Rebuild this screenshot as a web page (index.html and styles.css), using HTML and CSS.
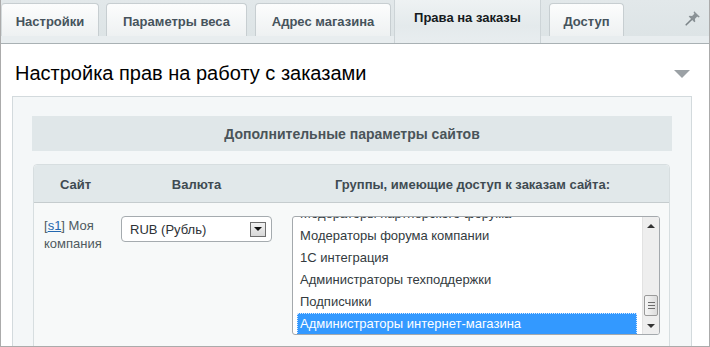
FILE: index.html
```html
<!DOCTYPE html>
<html lang="ru">
<head>
<meta charset="utf-8">
<title>Права на заказы</title>
<link rel="stylesheet" href="styles.css">
</head>
<body>
<div class="frame">
  <div class="tabbar">
    <div class="tab tab-settings">Настройки</div>
    <div class="tab tab-weight">Параметры веса</div>
    <div class="tab tab-address">Адрес магазина</div>
    <div class="tab tab-active">Права на заказы</div>
    <div class="tab tab-access">Доступ</div>
    <svg class="pin" width="16" height="16" viewBox="0 0 16 16" aria-hidden="true">
      <path d="M9.2 1.2 L14.8 6.8 L13.6 7.4 L12.2 6.6 L9.9 8.9 L10.3 11.4 L9.4 12.3 L3.7 6.6 L4.6 5.7 L7.1 6.1 L9.4 3.8 L8.6 2.4 Z" fill="#8a9296"/>
      <path d="M6.3 9.7 L1.2 14.8" stroke="#7c8488" stroke-width="1.6" stroke-linecap="round"/>
    </svg>
  </div>
  <div class="content">
    <div class="title-row">
      <h1 class="title">Настройка прав на работу с заказами</h1>
      <span class="collapse"></span>
    </div>
    <div class="panel">
      <div class="section-head">Дополнительные параметры сайтов</div>
      <div class="table">
        <div class="th">Сайт</div>
        <div class="th">Валюта</div>
        <div class="th">Группы, имеющие доступ к заказам сайта:</div>
        <div class="td td-site">[<a class="site-link" href="#">s1</a>] Моя компания</div>
        <div class="td td-cur">
          <div class="select">
            <span class="select-text">RUB (Рубль)</span>
            <span class="select-btn"><span class="caret"></span></span>
          </div>
        </div>
        <div class="td td-groups">
          <div class="listbox">
            <div class="list-view">
              <div class="list">
                <div class="opt">Модераторы партнерского форума</div>
                <div class="opt">Модераторы форума компании</div>
                <div class="opt">1С интеграция</div>
                <div class="opt">Администраторы техподдержки</div>
                <div class="opt">Подписчики</div>
                <div class="opt opt-selected">Администраторы интернет-магазина</div>
              </div>
            </div>
            <div class="scrollbar">
              <div class="sb-btn"><span class="sb-up"></span></div>
              <div class="sb-track">
                <div class="sb-thumb"><span></span><span></span><span></span></div>
              </div>
              <div class="sb-btn"><span class="sb-down"></span></div>
            </div>
          </div>
        </div>
      </div>
    </div>
  </div>
</div>
</body>
</html>
```
FILE: styles.css
```css
* { box-sizing: border-box; }
html, body { margin: 0; padding: 0; }
body {
  background: #ffffff;
  font-family: "Liberation Sans", Arial, sans-serif;
  font-size: 13px;
  color: #333;
}
.frame {
  width: 710px;
  height: 347px;
  border-left: 1px solid #ababab;
  border-right: 1px solid #ababab;
  border-bottom: 1px solid #ababab;
  overflow: hidden;
  background: #fff;
}
.tabbar {
  display: flex;
  align-items: flex-start;
  height: 44px;
  padding-top: 3px;
  background: linear-gradient(to bottom, #e2e8ea 0, #dde4e6 36px, #e8edef 36px, #e8edef 43px);
  border-bottom: 1px solid #a9b1b4;
}
.tab {
  height: 33px;
  padding: 2px 0 0;
  margin-right: 8px;
  display: flex;
  align-items: center;
  justify-content: center;
  font-weight: bold;
  font-size: 13px;
  color: #46535c;
  white-space: nowrap;
  background: linear-gradient(to bottom, #fcfdfd, #eef1f2);
  border: 1px solid #c7ced1;
  border-bottom: none;
  border-radius: 4px 4px 0 0;
}
.tab-settings { width: 98px; margin-right: 7px; border-left-color: #d4dadc; }
.tab-weight { width: 141px; }
.tab-address { width: 136px; }
.tab-access { width: 75px; }
.tab-active {
  width: 147px;
  height: 43px;
  margin-top: -3px;
  margin-left: -5px;
  padding: 10px 0 0;
  align-items: flex-start;
  line-height: 16px;
  color: #151a1d;
  background: linear-gradient(to bottom, #eef2f3, #e4eaec 60%, #e8edef);
  border-color: #cdd4d7;
  border-top: none;
  border-radius: 0;
}
.pin {
  margin-left: auto;
  margin-top: 7px;
  margin-right: 8px;
}
.content { padding: 0 17px 0 11px; }
.title-row {
  display: flex;
  align-items: center;
  justify-content: space-between;
  padding: 17px 2px 11px 3px;
}
.title {
  margin: 0;
  font-size: 20px;
  line-height: 24px;
  font-weight: normal;
  color: #000;
}
.collapse {
  width: 0;
  height: 0;
  border-left: 8px solid transparent;
  border-right: 8px solid transparent;
  border-top: 8px solid #9ba1a5;
  margin-top: 1px;
}
.panel {
  border: 1px solid #d3dadd;
  background: #f4f7f8;
  padding: 19px 19px 60px;
}
.section-head {
  height: 35px;
  background: #e0e7e9;
  display: flex;
  align-items: center;
  justify-content: center;
  font-weight: bold;
  color: #4a5459;
  font-size: 14px;
}
.table {
  margin: 13px 2px 0 1px;
  display: grid;
  grid-template-columns: 83px 159px 1fr;
  border: 1px solid #d7dee0;
  border-radius: 4px 4px 0 0;
  background: #f7f9f9;
}
.th {
  height: 38px;
  background: #e1e8ea;
  border-bottom: 1px solid #c5ccce;
  display: flex;
  align-items: center;
  justify-content: center;
  font-weight: bold;
  color: #3f4b52;
  font-size: 13px;
  padding-top: 1px;
}
.th:first-child { border-top-left-radius: 4px; }
.th:nth-child(3) { border-top-right-radius: 4px; }
.td { padding-top: 13px; padding-bottom: 60px; }
.td-site {
  padding-left: 10px;
  padding-right: 4px;
  padding-top: 14px;
  line-height: 18px;
  color: #4f5a60;
  font-size: 13px;
}
.site-link { color: #2468b0; text-decoration: underline; }
.td-cur { padding-left: 4px; padding-right: 4px; }
.select {
  width: 151px;
  height: 26px;
  background: #fff;
  border: 1px solid #a5abaf;
  border-radius: 4px;
  display: flex;
  align-items: center;
  justify-content: space-between;
  padding: 0 5px 0 8px;
}
.select-text { color: #2e3236; font-size: 13px; padding-top: 1px; }
.select-btn {
  width: 16px;
  height: 15px;
  border: 1px solid #6e6e6e;
  background: linear-gradient(to bottom, #f2f2f2, #d8d8d8);
  display: flex;
  align-items: center;
  justify-content: center;
}
.caret {
  width: 0;
  height: 0;
  border-left: 4px solid transparent;
  border-right: 4px solid transparent;
  border-top: 4px solid #111;
}
.td-groups { padding-left: 16px; padding-right: 9px; }
.listbox {
  height: 119px;
  background: #fff;
  border: 1px solid #a4a9ad;
  border-radius: 3px;
  display: flex;
  overflow: hidden;
}
.list-view {
  flex: 1;
  overflow: hidden;
  padding: 0 5px 0 4px;
}
.list { margin-top: -14px; }
.opt {
  height: 22px;
  line-height: 22px;
  padding-left: 3px;
  color: #333b40;
  font-size: 13px;
  white-space: nowrap;
}
.opt-selected {
  background: #3399ff;
  color: #fff;
  outline: 1px dotted #d8e9ff;
  outline-offset: -1px;
}
.scrollbar {
  width: 17px;
  display: flex;
  flex-direction: column;
  background: #eeeeee;
  border-left: 1px solid #e2e2e2;
}
.sb-btn {
  height: 17px;
  display: flex;
  align-items: center;
  justify-content: center;
}
.sb-up {
  width: 0; height: 0;
  border-left: 4px solid transparent;
  border-right: 4px solid transparent;
  border-bottom: 4px solid #333;
}
.sb-down {
  width: 0; height: 0;
  border-left: 4px solid transparent;
  border-right: 4px solid transparent;
  border-top: 4px solid #333;
}
.sb-track {
  flex: 1;
  display: flex;
  flex-direction: column;
  justify-content: flex-end;
  padding: 0 1px 1px;
}
.sb-thumb {
  height: 21px;
  border: 1px solid #9a9a9a;
  border-radius: 2px;
  background: linear-gradient(to right, #f6f6f6, #dcdcdc);
  display: flex;
  flex-direction: column;
  align-items: center;
  justify-content: center;
  gap: 2px;
}
.sb-thumb span {
  width: 7px;
  height: 1px;
  background: #6d6d6d;
}
```
